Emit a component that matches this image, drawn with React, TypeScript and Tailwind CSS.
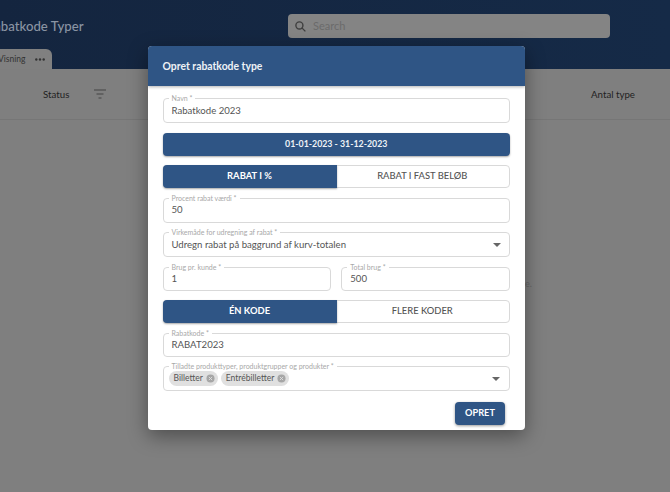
const FONT = 'font-["Lato","Noto_Sans",sans-serif]';

// Outlined text field with the label sitting in the border
function Field({ label, value, h, grow }: { label: string; value: string; h: string; grow?: boolean }) {
  return (
    <div className={`relative flex items-center rounded border border-[#d9d9d9] px-2 ${h} ${grow ? 'flex-1' : ''}`}>
      <span className="absolute -top-[6px] left-[5px] bg-white px-[3px] text-[7px] leading-[10px] text-[#a8a8a8]">{label}</span>
      <span className="pt-[1px] text-[9.6px] text-[#555]">{value}</span>
    </div>
  );
}

function Arrow() {
  return (
    <svg width="8" height="4" viewBox="0 0 10 5" className="absolute right-[9px] top-1/2 -translate-y-1/2">
      <path d="M0 0h10L5 5z" fill="#666" />
    </svg>
  );
}

function Toggle({ left, right }: { left: string; right: string }) {
  return (
    <div className="flex h-[23px] rounded border border-[#d9d9d9] text-[9.4px] font-medium">
      <div className="-m-px flex w-[174px] items-center justify-center rounded-l bg-[#2f5585] font-bold text-white shadow-[0_1px_2px_rgba(0,0,0,0.35)]">{left}</div>
      <div className="flex flex-1 items-center justify-center text-[#555]">{right}</div>
    </div>
  );
}

function Chip({ label }: { label: string }) {
  return (
    <div className="flex h-[15px] items-center gap-[3px] rounded-full bg-[#e0e0e0] pl-[5px] pr-[3px] text-[8.5px] text-[#555]">
      {label}
      <svg width="9" height="9" viewBox="0 0 10 10">
        <circle cx="5" cy="5" r="4.5" fill="#a6a6a6" />
        <path d="M3.2 3.2l3.6 3.6M6.8 3.2l-3.6 3.6" stroke="#e0e0e0" strokeWidth="1" />
      </svg>
    </div>
  );
}

export default function App() {
  return (
    <div className={`relative h-[492px] w-[670px] overflow-hidden bg-[#7f7f7f] ${FONT}`}>
      {/* Page behind the dialog */}
      <div className="relative h-[69px] bg-gradient-to-r from-[#14253f] to-[#152a47]">
        <div className="flex h-[52px] items-center">
          <span className="-ml-[14px] w-[286px] pt-[2px] text-[13.2px] font-medium whitespace-nowrap text-[#8a94a3]">Rabatkode Typer</span>
          <div className="ml-[16px] flex h-[24px] w-[322px] items-center gap-[6px] rounded bg-[#848484] px-[6px]">
            <svg width="13" height="13" viewBox="0 0 24 24" fill="none" stroke="#3f3f3f" strokeWidth="2.6">
              <circle cx="10" cy="10" r="6.5" />
              <path d="M15 15l6 6" />
            </svg>
            <span className="text-[11px] text-[#6b6b6b]">Search</span>
          </div>
        </div>
        <div className="absolute bottom-0 left-0 flex h-[20px] w-[52px] items-center justify-between rounded-tr-md bg-[#808080] pr-[7px] text-[8.5px] text-[#333]">
          <span className="-ml-[2px]">Visning</span>
          <svg width="10" height="3" viewBox="0 0 10 3" fill="#333">
            <circle cx="1.3" cy="1.5" r="1.2" />
            <circle cx="5" cy="1.5" r="1.2" />
            <circle cx="8.7" cy="1.5" r="1.2" />
          </svg>
        </div>
      </div>
      <div className="flex h-[51px] items-center border-b border-[#767676] text-[9.7px] text-[#222]">
        <span className="ml-[43px]">Status</span>
        <svg width="12" height="10" viewBox="0 0 12 10" className="ml-[25px]" stroke="#444" strokeWidth="1.2">
          <path d="M0 1h12M2.5 5h7M4.5 9h3" />
        </svg>
        <span className="ml-auto mr-[35px]">Antal type</span>
      </div>
      {/* End of the empty-state text, mostly hidden by the dialog */}
      <span className="absolute left-[525px] top-[277px] text-[9px] text-[#666]">e.</span>

      {/* Dialog */}
      <div className="absolute left-[147.5px] top-[46px] w-[377.5px] overflow-hidden rounded bg-white shadow-[0_6px_20px_rgba(0,0,0,0.4)]">
        <div className="flex h-[40px] items-center bg-[#2f5585] px-[15px] pt-[1px] text-[10.4px] font-bold text-[#eef2f6] shadow-[0_1px_3px_rgba(0,0,0,0.3)]">
          Opret rabatkode type
        </div>
        <div className="flex flex-col gap-[9.5px] px-[15px] pb-[5px] pt-[12px]">
          <Field label="Navn *" value="Rabatkode 2023" h="h-[25px]" />
          <div className="flex h-[23px] items-center justify-center rounded bg-[#2f5585] text-[8.8px] font-bold text-[#eef2f6] shadow-[0_1px_2px_rgba(0,0,0,0.35)]">
            01-01-2023 - 31-12-2023
          </div>
          <Toggle left="RABAT I %" right="RABAT I FAST BELØB" />
          <Field label="Procent rabat værdi *" value="50" h="h-[25px]" />
          <div className="relative">
            <Field label="Virkemåde for udregning af rabat *" value="Udregn rabat på baggrund af kurv-totalen" h="h-[25px]" />
            <Arrow />
          </div>
          <div className="flex gap-[10px]">
            <Field label="Brug pr. kunde *" value="1" h="h-[24px]" grow />
            <Field label="Total brug *" value="500" h="h-[24px]" grow />
          </div>
          <Toggle left="ÉN KODE" right="FLERE KODER" />
          <Field label="Rabatkode *" value="RABAT2023" h="h-[24px]" />
          <div className="relative flex h-[25px] items-center gap-[3px] rounded border border-[#d9d9d9] px-[5px]">
            <span className="absolute -top-[6px] left-[5px] bg-white px-[3px] text-[7px] leading-[10px] text-[#a8a8a8]">Tilladte produkttyper, produktgrupper og produkter *</span>
            <Chip label="Billetter" />
            <Chip label="Entrébilletter" />
            <Arrow />
          </div>
          <div className="flex justify-end pr-[5px] pt-[1px]">
            <div className="flex h-[23px] w-[50px] items-center justify-center rounded bg-[#2f5585] text-[9.2px] font-bold text-white shadow-[0_1px_3px_rgba(0,0,0,0.4)]">
              OPRET
            </div>
          </div>
        </div>
      </div>
    </div>
  );
}
